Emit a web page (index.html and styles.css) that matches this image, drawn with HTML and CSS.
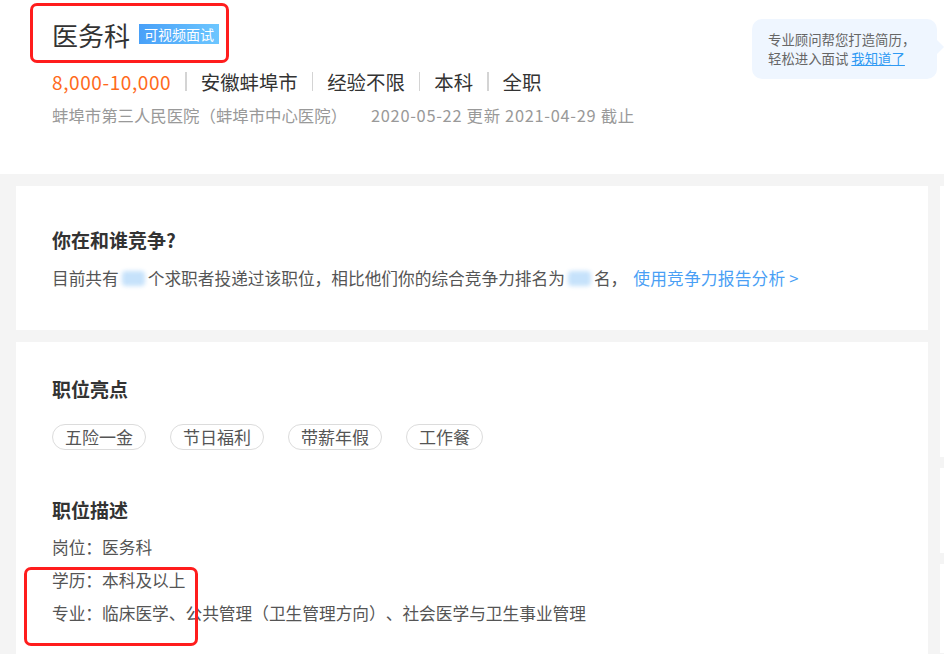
FILE: index.html
```html
<!DOCTYPE html>
<html lang="zh-CN">
<head>
<meta charset="utf-8">
<title>医务科</title>
<link rel="stylesheet" href="styles.css">
</head>
<body>
<header class="header">
  <div class="title-row">
    <h1 class="title">医务科</h1>
    <span class="badge">可视频面试</span>
  </div>
  <div class="meta">
    <span class="salary">8,000-10,000</span>
    <span class="sep"></span>
    <span>安徽蚌埠市</span>
    <span class="sep"></span>
    <span>经验不限</span>
    <span class="sep"></span>
    <span>本科</span>
    <span class="sep"></span>
    <span>全职</span>
  </div>
  <div class="sub">蚌埠市第三人民医院（蚌埠市中心医院）<span class="dates">2020-05-22 更新 2021-04-29 截止</span></div>
  <div class="tip">
    <p>专业顾问帮您打造简历，</p>
    <p>轻松进入面试 <a class="tip-link" href="#">我知道了</a></p>
  </div>
  <div class="mark mark-title"></div>
</header>
<main class="main">
  <div class="left">
    <section class="card card-compete">
      <h2 class="heading">你在和谁竞争?</h2>
      <p class="text">目前共有<span class="blob"></span>个求职者投递过该职位，相比他们你的综合竞争力排名为<span class="blob"></span>名，<a class="link" href="#">使用竞争力报告分析 &gt;</a></p>
    </section>
    <section class="card card-detail">
      <h2 class="heading">职位亮点</h2>
      <div class="tags">
        <span class="tag">五险一金</span>
        <span class="tag">节日福利</span>
        <span class="tag">带薪年假</span>
        <span class="tag">工作餐</span>
      </div>
      <h2 class="heading heading-desc">职位描述</h2>
      <div class="desc">
        <p>岗位：医务科</p>
        <p>学历：本科及以上</p>
        <p>专业：临床医学、公共管理（卫生管理方向）、社会医学与卫生事业管理</p>
      </div>
    </section>
  </div>
  <aside class="right">
    <div class="side side-a"></div>
    <div class="side side-b"></div>
    <div class="side side-c"></div>
  </aside>
</main>
<div class="mark mark-desc"></div>
</body>
</html>
```

FILE: styles.css
```css
* { box-sizing: border-box; }
html, body {
  margin: 0;
  padding: 0;
}
body {
  width: 944px;
  height: 654px;
  overflow: hidden;
  background: #f4f4f4;
  font-family: "Noto Sans CJK SC", "Noto Sans", sans-serif;
  color: #555;
  position: relative;
  text-spacing-trim: space-all;
}
p { margin: 0; }

.header {
  position: relative;
  height: 174px;
  background: #fff;
  padding: 15px 0 0 52px;
}
.title-row {
  display: flex;
  align-items: center;
  height: 40px;
}
.title {
  margin: 0;
  font-size: 26px;
  font-weight: 400;
  color: #333;
  line-height: 40px;
}
.badge {
  margin-left: 9px;
  height: 20px;
  line-height: 20px;
  padding: 0 5px;
  font-size: 14px;
  color: #fff;
  background: linear-gradient(90deg, #48a0f8, #6cc6ff);
  margin-top: -2px;
}
.meta {
  margin-top: 12px;
  display: flex;
  align-items: center;
  height: 28px;
  font-size: 19.4px;
  color: #333;
}
.salary {
  color: #ff6a1c;
  font-size: 19px;
  letter-spacing: 0.6px;
}
.sep {
  width: 1.5px;
  height: 19px;
  background: #d4d4d4;
  margin: 0 14px;
}
.sub {
  margin-top: 8px;
  height: 24px;
  line-height: 24px;
  font-size: 16.4px;
  color: #999;
}
.dates {
  margin-left: 24px;
  letter-spacing: 0.7px;
}

.tip {
  position: absolute;
  left: 752px;
  top: 19px;
  width: 185px;
  height: 60px;
  background: #eff6ff;
  border-radius: 10px;
  padding: 11px 0 0 16px;
  font-size: 13.4px;
  line-height: 19px;
  color: #666;
}
.tip::after {
  content: "";
  position: absolute;
  right: -7px;
  top: 21px;
  border-top: 7px solid transparent;
  border-bottom: 7px solid transparent;
  border-left: 7px solid #eff6ff;
}
.tip-link {
  color: #2f9af3;
  text-decoration: underline;
}

.mark {
  position: absolute;
  border: 3px solid #ff1d1d;
  border-radius: 7px;
}
.mark-title { left: 30px; top: 3px; width: 199px; height: 60px; }
.mark-desc { left: 24px; top: 567px; width: 174px; height: 79px; }

.main {
  display: flex;
  gap: 12px;
  padding: 12px 0 0 16px;
}
.left {
  width: 912px;
  flex: none;
  display: flex;
  flex-direction: column;
  gap: 12px;
}
.card {
  background: #fff;
  padding: 0 36px;
}
.card-compete {
  height: 144px;
  padding-top: 41px;
}
.card-detail {
  height: 312px;
  padding-top: 34px;
}
.heading {
  margin: 0;
  font-size: 19px;
  font-weight: 700;
  line-height: 26px;
  color: #333;
}
.text {
  margin-top: 12px;
  font-size: 16.7px;
  line-height: 26px;
  color: #555;
  display: flex;
  align-items: center;
  white-space: nowrap;
}
.blob {
  display: inline-block;
  width: 23px;
  height: 15px;
  margin: 0 3px 0 3px;
  background: #c6e2fb;
  border-radius: 4px;
  filter: blur(2px);
}
.link {
  margin-left: 6px;
  color: #4a9ff5;
  text-decoration: none;
  letter-spacing: 0.2px;
}
.tags {
  margin-top: 22px;
  display: flex;
  gap: 24px;
}
.tag {
  height: 26px;
  line-height: 24px;
  padding: 0 12px;
  border: 1px solid #dcdcdc;
  border-radius: 13px;
  font-size: 17px;
  color: #555;
}
.heading-desc { margin-top: 47px; }
.desc {
  margin-top: 8px;
  font-size: 16.7px;
  line-height: 33px;
  color: #555;
}

.right {
  flex: 1;
  min-width: 0;
  display: flex;
  flex-direction: column;
  gap: 11px;
}
.side { background: #fff; }
.side-a { height: 271px; }
.side-b { height: 85px; }
.side-c { height: 89px; }
```
